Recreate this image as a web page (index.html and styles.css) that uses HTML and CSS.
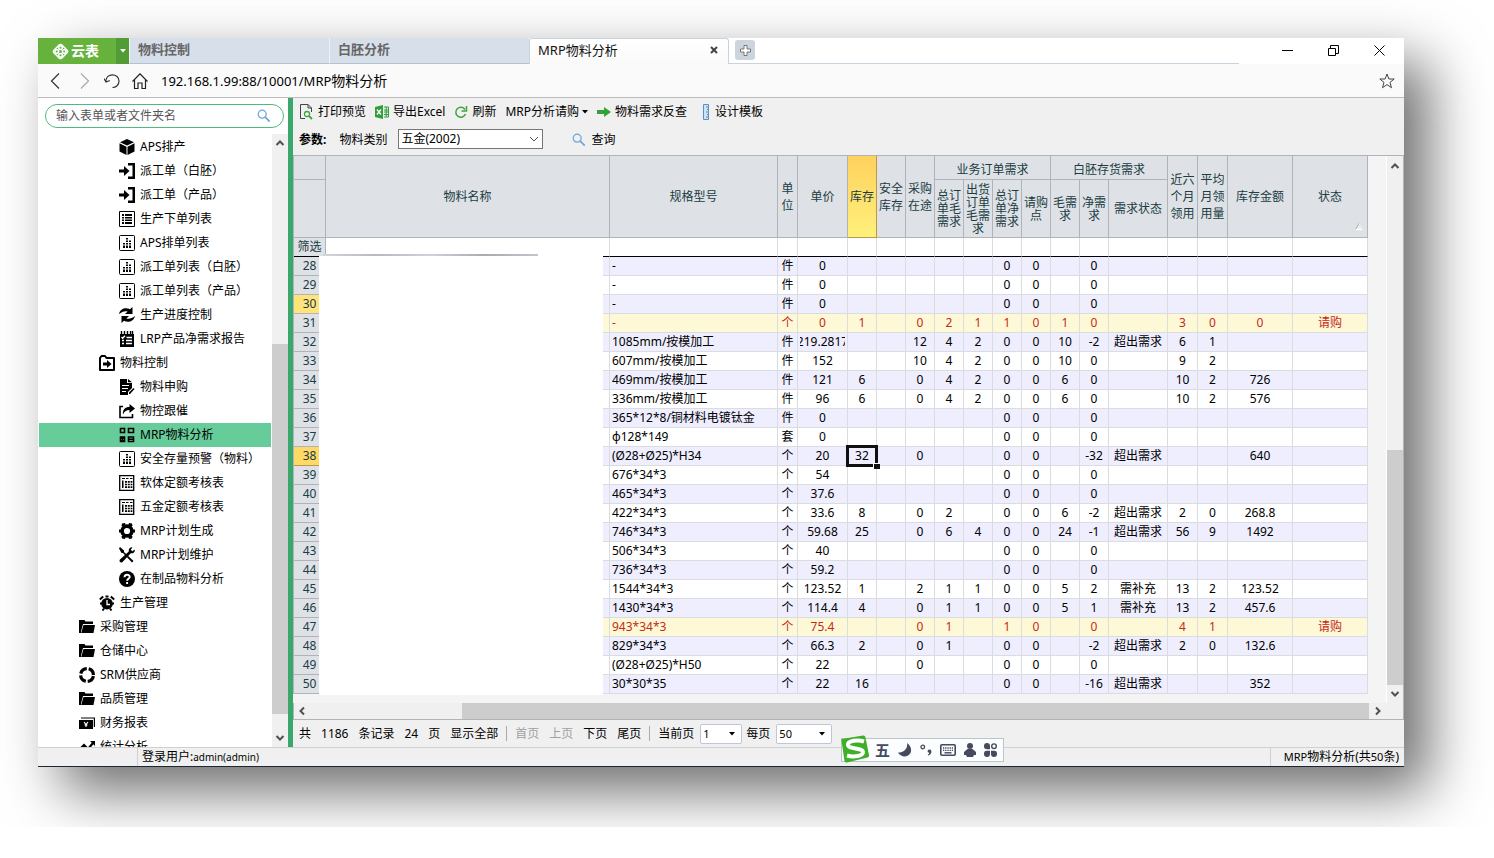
FILE: index.html
```
<!DOCTYPE html>
<html lang="zh-CN">
<head>
<meta charset="utf-8">
<title>MRP物料分析</title>
<link rel="stylesheet" href="styles.css">
</head>
<body>

<svg class="sprite" aria-hidden="true">
  <symbol id="i-box" viewBox="0 0 16 16"><path d="M8 0l7 3.2L8 6.6 1 3.2zM.5 4.3l7 3.4V16l-7-3.6zM15.500 4.300l-7 3.400V16l7-3.600z"/></symbol>
  <symbol id="i-enter" viewBox="0 0 16 16"><path d="M0 6.500h5V3l5.500 5L5 13V9.500H0zM9 0h7v16H9v-2.500h4.500v-11H9z"/></symbol>
  <symbol id="i-list" viewBox="0 0 16 16"><path d="M.5.5h15v15H.5z" fill="none" stroke="#000"/><path d="M3 3h2v2H3zM6 3h7v2H6zM3 6h2v1.500H3zM6 6h7v1.500H6zM3 8.500h2V10H3zM6 8.500h7V10H6zM3 11h2v2H3zM6 11h7v2H6z"/></symbol>
  <symbol id="i-chart" viewBox="0 0 16 16"><rect x=".5" y=".5" width="15" height="15" rx="1" fill="none" stroke="#000"/><path d="M7 3h2v1.500H7zM7 5.500h2V7H7zM7 8h2v1.500H7zM7 10.500h2V13H7zM4 8h2v1.500H4zM4 10.500h2V13H4zM10 5.500h2V7h-2zM10 8h2v1.500h-2zM10 10.500h2V13h-2z"/></symbol>
  <symbol id="i-sync" viewBox="0 0 16 16"><path d="M0 7C1 1.500 7 0 11 2.200L13.500 0v7H6l2.600-2.500C5.500 3.600 3 4.800 0 7zM16 9C15 14.500 9 16 5 13.800L2.500 16V9H10l-2.600 2.500C10.500 12.400 13 11.200 16 9z"/></symbol>
  <symbol id="i-check" viewBox="0 0 16 16"><path d="M1 3h14v13H1z"/><path d="M2.500 0v4M5.500 0v4M8.500 0v4M11.500 0v4M13.500 0v4" stroke="#000" stroke-width="1.400"/><path d="M2.500 6l1.200 1.200L6 4.700M7.500 6.500H13M3 9.500h2M7 9.500h6M3 12.500h2M7 12.500h6" stroke="#fff" fill="none" stroke-width="1.300"/></symbol>
  <symbol id="i-folderin" viewBox="0 0 16 16"><path d="M1 15V3l1.500-2H6l1.500 2H15v12z" fill="none" stroke="#000" stroke-width="2" stroke-linejoin="round"/><path d="M4 7.500h4V5l4.500 4L8 13v-2.500H4z"/></symbol>
  <symbol id="i-doc" viewBox="0 0 16 16"><path d="M1 0h7v4h5v5l-4 4v3H1zM9 0l4 3.200H9zM10 13.500L14.500 9l1 1-4.500 5H10z"/><path d="M3 6.500h7M3 9.500h6M3 12.500h4" stroke="#fff" stroke-width="1.200"/></symbol>
  <symbol id="i-share" viewBox="0 0 16 16"><path d="M4 3.500H1v11h12.500V11" fill="none" stroke="#000" stroke-width="1.600"/><path d="M4 11.500C3.500 6.500 6 4 10.500 4V1L16 5.500 10.500 10V7C7.500 7 5.500 8 4 11.500z"/></symbol>
  <symbol id="i-grid" viewBox="0 0 16 16"><g fill="none" stroke="#000" stroke-width="1.600"><path d="M1.500 1.500h4v4h-4zM9.500 1.500h5v4h-5zM1.500 10h4v4.500h-4zM9.500 10h5v4.500h-5zM2 10l3 4M5 10l-3 4M10 12.200h4"/></g></symbol>
  <symbol id="i-sheet" viewBox="0 0 16 16"><path d="M.7.700h14v14.600H.7z" fill="none" stroke="#000" stroke-width="1.300"/><path d="M3 3h3v1H3zM7 3h2.500v1H7zM11 3h2.500v1H11zM3 5.500h1.500V13H3zM6 6h2v1.700H6zM6 8.700h2v1.600H6zM6 11.300h2V13H6zM8.800 6h2v1.700h-2zM8.800 8.700h2v1.600h-2zM8.800 11.300h2V13h-2zM11.600 6h1.800v1.700h-1.800zM11.600 8.700h1.800v1.600h-1.800zM11.600 11.300h1.800V13h-1.800z"/></symbol>
  <symbol id="i-gear" viewBox="0 0 16 16"><circle cx="8" cy="8" r="4.900" fill="none" stroke="#000" stroke-width="3.600"/><path d="M3 .5L6 0l1 3H2.500zM13 .5L10 0 9 3h4.500zM3 15.500l3 .5 1-3H2.500zM13 15.500l-3 .5-1-3h4.500zM0 6.500h2v3H0zM14 6.500h2v3h-2z"/></symbol>
  <symbol id="i-tools" viewBox="0 0 16 16"><path d="M1 0l4 3.500V5l9.500 9-1.500 1.500L4 6H2.500L0 1.500z"/><path d="M15.800 2.500l-2.500 1.700-1.500-1.500L13.500.3C11 0 9.300 2 9.800 4.500L1 12.500c-1.500 1.800.8 4 2.500 2.500l8.300-8.800c2.500.4 4.400-1.300 4-3.700z"/></symbol>
  <symbol id="i-help" viewBox="0 0 16 16"><circle cx="8" cy="8" r="8"/><path d="M5.500 6.200c0-3.300 5.200-3.200 5.200-.3 0 1.900-2.600 1.900-2.600 3.900M8.100 11v2" fill="none" stroke="#fff" stroke-width="1.900"/></symbol>
  <symbol id="i-clock" viewBox="0 0 16 16"><circle cx="8" cy="8.700" r="5.800"/><path d="M.8 4.500L4.200 1.500M15.200 4.500L11.800 1.500M3.500 15.500l1.500-2M12.500 15.500L11 13.500M1 8.500h2M13 8.500h2M6.500 1.500h3" stroke="#000" stroke-width="2"/><path d="M8 5v4.500h3" stroke="#fff" fill="none" stroke-width="1.300"/></symbol>
  <symbol id="i-folder" viewBox="0 0 16 16"><path d="M0 1h5.500l1 1.500H14V5H4L2 12.500V14H0z"/><path d="M4.500 6H16l-1.500 8H2.200z"/></symbol>
  <symbol id="i-ring" viewBox="0 0 16 16"><circle cx="8" cy="8" r="6.400" fill="none" stroke="#000" stroke-width="3.200" stroke-dasharray="8.050 2" stroke-dashoffset="-1"/></symbol>
  <symbol id="i-money" viewBox="0 0 16 16"><path d="M0 5h14v9H0z"/><path d="M2 3h13.400v9" fill="none" stroke="#000" stroke-width="1.200"/><path d="M5 7l2 2.500L9 7M7 9.500V12M5.500 10h3" fill="none" stroke="#fff" stroke-width="1.200"/></symbol>
  <symbol id="i-trend" viewBox="0 0 16 16"><path d="M0 11l5-5 4 4 5-6M1 15l4-4 4 3 5-5" fill="none" stroke="#000" stroke-width="2.200"/><path d="M11 2h5v5z"/></symbol>
  <symbol id="i-search" viewBox="0 0 14 14"><circle cx="5.200" cy="5.200" r="4" fill="none" stroke="#6fa6d8" stroke-width="1.200"/><path d="M8.200 8.200l4.500 4.500" stroke="#6fa6d8" stroke-width="1.700"/></symbol>
  <symbol id="i-up" viewBox="0 0 10 10"><path d="M1.500 7L5 3.500 8.500 7" fill="none" stroke="#505050" stroke-width="2"/></symbol>
  <symbol id="i-down" viewBox="0 0 10 10"><path d="M1.500 3L5 6.500 8.500 3" fill="none" stroke="#505050" stroke-width="2"/></symbol>
  <symbol id="i-left" viewBox="0 0 10 10"><path d="M7 1.500L3.500 5 7 8.500" fill="none" stroke="#505050" stroke-width="2"/></symbol>
  <symbol id="i-right" viewBox="0 0 10 10"><path d="M3 1.500L6.500 5 3 8.500" fill="none" stroke="#505050" stroke-width="2"/></symbol>
  <symbol id="i-caret" viewBox="0 0 6 4"><path d="M0 0h6L3 3.500z"/></symbol>
</svg>

<div class="window">

  <header class="tabs">
    <button class="brand" type="button">
      <svg width="17" height="17" viewBox="0 0 17 17" fill="none" stroke="#fff" stroke-width="1.500"><rect x="3" y="3" width="11" height="11" rx="2" transform="rotate(45 8.500 8.500)"/><circle cx="8.500" cy="4.800" r="1.800"/><circle cx="8.500" cy="12.200" r="1.800"/><circle cx="4.800" cy="8.500" r="1.800"/><circle cx="12.200" cy="8.500" r="1.800"/></svg>
      云表
    </button>
    <button class="brand-more" type="button" aria-label="菜单"><svg width="6" height="4" fill="#fff"><use href="#i-caret"/></svg></button>
    <a class="tab" href="#">物料控制</a>
    <a class="tab" href="#">白胚分析</a>
    <a class="tab active" href="#">MRP物料分析
      <svg width="8" height="8" viewBox="0 0 8 8"><path d="M1 1l6 6M7 1L1 7" stroke="#444" stroke-width="2"/></svg>
    </a>
    <div class="tab-rest">
      <button class="new-tab" type="button" aria-label="新标签"><svg width="11" height="11" viewBox="0 0 11 11"><path d="M4 .5h3V4h3.500v3H7v3.500H4V7H.5V4H4z" fill="#fff" stroke="#777"/></svg></button>
    </div>
    <div class="win-buttons">
      <button type="button" aria-label="最小化"><svg width="11" height="11" viewBox="0 0 11 11"><path d="M0 5.500h11" stroke="#000"/></svg></button>
      <button type="button" aria-label="还原"><svg width="11" height="11" viewBox="0 0 11 11" fill="none" stroke="#000"><path d="M.5 3.500h7v7h-7zM2.500 3.500v-3h8v8h-3"/></svg></button>
      <button type="button" aria-label="关闭"><svg width="11" height="11" viewBox="0 0 11 11"><path d="M.5.5l10 10M10.500.5l-10 10" stroke="#000"/></svg></button>
    </div>
  </header>

  <nav class="address">
    <button type="button" aria-label="后退"><svg width="16" height="16" viewBox="0 0 16 16"><path d="M11 .5L3.500 8l7.500 7.500" fill="none" stroke="#333" stroke-width="1.200"/></svg></button>
    <button type="button" aria-label="前进"><svg width="16" height="16" viewBox="0 0 16 16"><path d="M5 .5L12.500 8 5 15.500" fill="none" stroke="#aaa" stroke-width="1.200"/></svg></button>
    <button type="button" aria-label="刷新"><svg width="16" height="16" viewBox="0 0 16 16"><path d="M1.800 8.500C2 -0.500 15 0 15 8c0 4-3 6.500-6.500 6.500M0 5.500l2 3.500 3.800-1.500" fill="none" stroke="#333" stroke-width="1.200"/></svg></button>
    <button type="button" aria-label="主页"><svg width="16" height="16" viewBox="0 0 16 16"><path d="M.5 8.500L8 .8l7.500 7.700M2.500 7v8.500H6V10h4v5.500h3.500V7" fill="none" stroke="#222" stroke-width="1.200"/></svg></button>
    <span class="url">192.168.1.99:88/10001/MRP<b>物料分析</b></span>
    <button class="star" type="button" aria-label="收藏"><svg width="16" height="16" viewBox="0 0 16 16"><path d="M8 1l1.900 5h5.300l-4.200 3.400 1.500 5.300L8 11.600l-4.500 3.100L5 9.400.8 6h5.300z" fill="none" stroke="#444"/></svg></button>
  </nav>

  <div class="main">
    <aside class="side">
      <label class="search">
        <input type="text" placeholder="输入表单或者文件夹名" aria-label="搜索">
        <svg width="14" height="14"><use href="#i-search"/></svg>
      </label>
      <div class="tree-wrap">
        <ul class="tree">
          <li class="l3"><svg><use href="#i-box"/></svg>APS排产</li>
          <li class="l3"><svg><use href="#i-enter"/></svg>派工单（白胚）</li>
          <li class="l3"><svg><use href="#i-enter"/></svg>派工单（产品）</li>
          <li class="l3"><svg><use href="#i-list"/></svg>生产下单列表</li>
          <li class="l3"><svg><use href="#i-chart"/></svg>APS排单列表</li>
          <li class="l3"><svg><use href="#i-chart"/></svg>派工单列表（白胚）</li>
          <li class="l3"><svg><use href="#i-chart"/></svg>派工单列表（产品）</li>
          <li class="l3"><svg><use href="#i-sync"/></svg>生产进度控制</li>
          <li class="l3"><svg><use href="#i-check"/></svg>LRP产品净需求报告</li>
          <li class="l2"><svg><use href="#i-folderin"/></svg>物料控制</li>
          <li class="l3"><svg><use href="#i-doc"/></svg>物料申购</li>
          <li class="l3"><svg><use href="#i-share"/></svg>物控跟催</li>
          <li class="l3 on"><svg><use href="#i-grid"/></svg>MRP物料分析</li>
          <li class="l3"><svg><use href="#i-chart"/></svg>安全存量预警（物料）</li>
          <li class="l3"><svg><use href="#i-sheet"/></svg>软体定额考核表</li>
          <li class="l3"><svg><use href="#i-sheet"/></svg>五金定额考核表</li>
          <li class="l3"><svg><use href="#i-gear"/></svg>MRP计划生成</li>
          <li class="l3"><svg><use href="#i-tools"/></svg>MRP计划维护</li>
          <li class="l3"><svg><use href="#i-help"/></svg>在制品物料分析</li>
          <li class="l2"><svg><use href="#i-clock"/></svg>生产管理</li>
          <li class="l1"><svg><use href="#i-folder"/></svg>采购管理</li>
          <li class="l1"><svg><use href="#i-folder"/></svg>仓储中心</li>
          <li class="l1"><svg><use href="#i-ring"/></svg>SRM供应商</li>
          <li class="l1"><svg><use href="#i-folder"/></svg>品质管理</li>
          <li class="l1"><svg><use href="#i-money"/></svg>财务报表</li>
          <li class="l1"><svg><use href="#i-trend"/></svg>统计分析</li>
        </ul>
        <div class="vbar side-bar">
          <svg width="10" height="10"><use href="#i-up"/></svg>
          <div class="rail"><div class="thumb"></div></div>
          <svg width="10" height="10"><use href="#i-down"/></svg>
        </div>
      </div>
    </aside>

    <section class="content">
      <div class="toolbar">
        <button type="button"><svg width="14" height="16" viewBox="0 0 14 16"><path d="M11.500 8V4L8 .5H.5v14H5M8 .5V4h3.500" fill="none" stroke="#444"/><circle cx="7" cy="10" r="2.500" fill="#fff" stroke="#3fa33f" stroke-width="1.300"/><path d="M9 12l3 3" stroke="#3fa33f" stroke-width="1.800"/></svg>打印预览</button>
        <button type="button"><svg width="14" height="14" viewBox="0 0 14 14"><path d="M0 2l8-2v14l-8-2z" fill="#2f9e3c"/><path d="M2 4.500l4 5M6 4.500l-4 5" stroke="#fff" stroke-width="1.400"/><path d="M9 2h4.500v10H9M9 5h4M9 7h4M9 9.500h4M11.200 2v10" fill="none" stroke="#2f9e3c"/></svg>导出Excel</button>
        <button type="button"><svg width="14" height="14" viewBox="0 0 14 14"><path d="M11 4.500A5 5 0 1 0 11.500 9" fill="none" stroke="#3fa33f" stroke-width="1.500"/><path d="M12.500 1v5H7.500" fill="none" stroke="#3fa33f" stroke-width="1.500"/></svg>刷新</button>
        <button type="button">MRP分析请购<svg class="caret" width="6" height="4"><use href="#i-caret"/></svg></button>
        <button type="button"><svg width="14" height="12" viewBox="0 0 14 12"><path d="M0 4h7V1l7 5-7 5V8H0z" fill="#2fa336"/></svg>物料需求反查</button>
        <button class="design" type="button"><svg width="8" height="16" viewBox="0 0 8 16"><path d="M1.500.5h5v15h-5z" fill="#cfe3f6" stroke="#5b8fc4"/><path d="M4 3h3M5 5.500h2M4 8h3M5 10.500h2M4 13h3" stroke="#5b8fc4"/></svg>设计模板</button>
      </div>
      <div class="params">
        <strong>参数:</strong>
        <label for="kind">物料类别</label>
        <span class="pick kind"><select id="kind"><option>五金(2002)</option></select><svg width="10" height="10" viewBox="0 0 10 10"><path d="M1 3l4 4 4-4" fill="none" stroke="#555"/></svg></span>
        <button type="button"><svg width="14" height="14"><use href="#i-search"/></svg>查询</button>
      </div>

      <div class="sheet">
        <div class="table-box">
          <table class="grid">
            <colgroup>
              <col class="w32"><col><col class="w168"><col class="w20"><col class="w50"><col class="w29"><col class="w29"><col class="w29">
              <col class="w29"><col class="w29"><col class="w29"><col class="w29"><col class="w29"><col class="w29"><col class="w59">
              <col class="w30"><col class="w30"><col class="w65"><col class="w75">
            </colgroup>
            <thead>
              <tr class="h1">
                <th></th>
                <th rowspan="2">物料名称</th>
                <th rowspan="2">规格型号</th>
                <th rowspan="2">单位</th>
                <th rowspan="2">单价</th>
                <th rowspan="2" class="hot">库存</th>
                <th rowspan="2">安全库存</th>
                <th rowspan="2">采购在途</th>
                <th colspan="4" class="group">业务订单需求</th>
                <th colspan="3" class="group">白胚存货需求</th>
                <th rowspan="2">近六个月领用</th>
                <th rowspan="2">平均月领用量</th>
                <th rowspan="2">库存金额</th>
                <th rowspan="2" class="sorted">状态<svg width="8" height="7" viewBox="0 0 8 7"><path d="M.5 6.500L4 .5l3.500 6z" fill="#eee" stroke="#aaa"/><path d="M.5 6.500h7L4 .5" fill="none" stroke="#fff"/></svg></th>
              </tr>
              <tr class="h2">
                <th></th>
                <th>总订单毛需求</th><th>出货订单毛需求</th><th>总订单净需求</th><th>请购点</th><th>毛需求</th><th>净需求</th><th>需求状态</th>
              </tr>
            </thead>
            <tbody>
              <tr class="filter"><th>筛选</th><td></td><td></td><td></td><td></td><td></td><td></td><td></td><td></td><td></td><td></td><td></td><td></td><td></td><td></td><td></td><td></td><td></td><td></td></tr>
              <tr><th>28</th><td></td><td>-</td><td>件</td><td>0</td><td></td><td></td><td></td><td></td><td></td><td>0</td><td>0</td><td></td><td>0</td><td></td><td></td><td></td><td></td><td></td></tr>
              <tr><th>29</th><td></td><td>-</td><td>件</td><td>0</td><td></td><td></td><td></td><td></td><td></td><td>0</td><td>0</td><td></td><td>0</td><td></td><td></td><td></td><td></td><td></td></tr>
              <tr><th class="mark">30</th><td></td><td>-</td><td>件</td><td>0</td><td></td><td></td><td></td><td></td><td></td><td>0</td><td>0</td><td></td><td>0</td><td></td><td></td><td></td><td></td><td></td></tr>
              <tr class="warn"><th>31</th><td></td><td>-</td><td>个</td><td>0</td><td>1</td><td></td><td>0</td><td>2</td><td>1</td><td>1</td><td>0</td><td>1</td><td>0</td><td></td><td>3</td><td>0</td><td>0</td><td>请购</td></tr>
              <tr><th>32</th><td></td><td>1085mm/按模加工</td><td>件</td><td><span class="clip">219.2817</span></td><td></td><td></td><td>12</td><td>4</td><td>2</td><td>0</td><td>0</td><td>10</td><td>-2</td><td>超出需求</td><td>6</td><td>1</td><td></td><td></td></tr>
              <tr><th>33</th><td></td><td>607mm/按模加工</td><td>件</td><td>152</td><td></td><td></td><td>10</td><td>4</td><td>2</td><td>0</td><td>0</td><td>10</td><td>0</td><td></td><td>9</td><td>2</td><td></td><td></td></tr>
              <tr><th>34</th><td></td><td>469mm/按模加工</td><td>件</td><td>121</td><td>6</td><td></td><td>0</td><td>4</td><td>2</td><td>0</td><td>0</td><td>6</td><td>0</td><td></td><td>10</td><td>2</td><td>726</td><td></td></tr>
              <tr><th>35</th><td></td><td>336mm/按模加工</td><td>件</td><td>96</td><td>6</td><td></td><td>0</td><td>4</td><td>2</td><td>0</td><td>0</td><td>6</td><td>0</td><td></td><td>10</td><td>2</td><td>576</td><td></td></tr>
              <tr><th>36</th><td></td><td>365*12*8/铜材料电镀钛金</td><td>件</td><td>0</td><td></td><td></td><td></td><td></td><td></td><td>0</td><td>0</td><td></td><td>0</td><td></td><td></td><td></td><td></td><td></td></tr>
              <tr><th>37</th><td></td><td>φ128*149</td><td>套</td><td>0</td><td></td><td></td><td></td><td></td><td></td><td>0</td><td>0</td><td></td><td>0</td><td></td><td></td><td></td><td></td><td></td></tr>
              <tr><th class="mark now">38</th><td></td><td>(Ø28+Ø25)*H34</td><td>个</td><td>20</td><td class="cursor">32</td><td></td><td>0</td><td></td><td></td><td>0</td><td>0</td><td></td><td>-32</td><td>超出需求</td><td></td><td></td><td>640</td><td></td></tr>
              <tr><th>39</th><td></td><td>676*34*3</td><td>个</td><td>54</td><td></td><td></td><td></td><td></td><td></td><td>0</td><td>0</td><td></td><td>0</td><td></td><td></td><td></td><td></td><td></td></tr>
              <tr><th>40</th><td></td><td>465*34*3</td><td>个</td><td>37.6</td><td></td><td></td><td></td><td></td><td></td><td>0</td><td>0</td><td></td><td>0</td><td></td><td></td><td></td><td></td><td></td></tr>
              <tr><th>41</th><td></td><td>422*34*3</td><td>个</td><td>33.6</td><td>8</td><td></td><td>0</td><td>2</td><td></td><td>0</td><td>0</td><td>6</td><td>-2</td><td>超出需求</td><td>2</td><td>0</td><td>268.8</td><td></td></tr>
              <tr><th>42</th><td></td><td>746*34*3</td><td>个</td><td>59.68</td><td>25</td><td></td><td>0</td><td>6</td><td>4</td><td>0</td><td>0</td><td>24</td><td>-1</td><td>超出需求</td><td>56</td><td>9</td><td>1492</td><td></td></tr>
              <tr><th>43</th><td></td><td>506*34*3</td><td>个</td><td>40</td><td></td><td></td><td></td><td></td><td></td><td>0</td><td>0</td><td></td><td>0</td><td></td><td></td><td></td><td></td><td></td></tr>
              <tr><th>44</th><td></td><td>736*34*3</td><td>个</td><td>59.2</td><td></td><td></td><td></td><td></td><td></td><td>0</td><td>0</td><td></td><td>0</td><td></td><td></td><td></td><td></td><td></td></tr>
              <tr><th>45</th><td></td><td>1544*34*3</td><td>个</td><td>123.52</td><td>1</td><td></td><td>2</td><td>1</td><td>1</td><td>0</td><td>0</td><td>5</td><td>2</td><td>需补充</td><td>13</td><td>2</td><td>123.52</td><td></td></tr>
              <tr><th>46</th><td></td><td>1430*34*3</td><td>个</td><td>114.4</td><td>4</td><td></td><td>0</td><td>1</td><td>1</td><td>0</td><td>0</td><td>5</td><td>1</td><td>需补充</td><td>13</td><td>2</td><td>457.6</td><td></td></tr>
              <tr class="warn"><th>47</th><td></td><td>943*34*3</td><td>个</td><td>75.4</td><td></td><td></td><td>0</td><td>1</td><td></td><td>1</td><td>0</td><td></td><td>0</td><td></td><td>4</td><td>1</td><td></td><td>请购</td></tr>
              <tr><th>48</th><td></td><td>829*34*3</td><td>个</td><td>66.3</td><td>2</td><td></td><td>0</td><td>1</td><td></td><td>0</td><td>0</td><td></td><td>-2</td><td>超出需求</td><td>2</td><td>0</td><td>132.6</td><td></td></tr>
              <tr><th>49</th><td></td><td>(Ø28+Ø25)*H50</td><td>个</td><td>22</td><td></td><td></td><td>0</td><td></td><td></td><td>0</td><td>0</td><td></td><td>0</td><td></td><td></td><td></td><td></td><td></td></tr>
              <tr><th>50</th><td></td><td>30*30*35</td><td>个</td><td>22</td><td>16</td><td></td><td></td><td></td><td></td><td>0</td><td>0</td><td></td><td>-16</td><td>超出需求</td><td></td><td></td><td>352</td><td></td></tr>
            </tbody>
          </table>
          <div class="mask"></div>
        </div>
        <div class="vbar sheet-bar">
          <svg width="10" height="10"><use href="#i-up"/></svg>
          <div class="rail"><div class="thumb"></div></div>
          <svg width="10" height="10"><use href="#i-down"/></svg>
        </div>
      </div>
      <div class="hbar">
        <svg width="10" height="10"><use href="#i-left"/></svg>
        <div class="rail"><div class="thumb"></div></div>
        <svg width="10" height="10"><use href="#i-right"/></svg>
      </div>

      <div class="pager">
        <span>共</span><span>1186</span><span>条记录</span><span>24</span><span>页</span>
        <a href="#">显示全部</a>
        <i></i>
        <a class="off" href="#">首页</a><a class="off" href="#">上页</a><a href="#">下页</a><a href="#">尾页</a>
        <i></i>
        <label for="page">当前页</label>
        <span class="pick page"><select id="page"><option>1</option></select><svg width="6" height="4"><use href="#i-caret"/></svg></span>
        <label for="size">每页</label>
        <span class="pick size"><select id="size"><option>50</option></select><svg width="6" height="4"><use href="#i-caret"/></svg></span>
      </div>
    </section>
  </div>

  <footer class="status">
    <span class="user">登录用户:<small>admin(admin)</small></span>
    <span class="total"><small>MRP</small>物料分析(共<small>50</small>条)</span>
  </footer>

  <div class="ime">
    <svg class="sogou" width="28" height="28" viewBox="0 0 28 28"><path d="M1 4L22 .5q2-.3 2.400 1.500L28 20q.3 2-1.500 2.500L6 27.500q-2 .3-2.500-1.500L.5 6q-.2-1.500.5-2z" fill="#3db028"/><path d="M23 6.500C17 4.500 6.500 5.500 7 10c.5 4.500 14.500 2.500 15 7 .3 4-9 5.500-16 3.500" fill="none" stroke="#fff" stroke-width="4"/></svg>
    <b>五</b>
    <svg width="14" height="14" viewBox="0 0 14 14"><path d="M9 0c1 5-2.500 9.500-9 9.500C2 13 6.500 14.500 10 12.500 14.500 10 14 3 9 0z"/></svg>
    <svg width="12" height="12" viewBox="0 0 12 12"><circle cx="2.800" cy="3" r="1.800" fill="none" stroke="#454b5e" stroke-width="1.300"/><path d="M10 5.500c2.500 1 1.500 5-1.800 6l-.5-.7c1.300-.6 1.600-1.300 1.500-2C6.500 8.700 7.500 5 10 5.500z"/></svg>
    <svg width="16" height="12" viewBox="0 0 16 12"><rect x=".8" y=".8" width="14.400" height="10.400" rx="1" fill="none" stroke="#454b5e" stroke-width="1.600"/><path d="M3 4h10M3 6.300h10" stroke="#454b5e" stroke-width="1.300" stroke-dasharray="1.300 .9"/><path d="M4.500 8.800h7" stroke="#454b5e" stroke-width="1.400"/></svg>
    <svg width="12" height="14" viewBox="0 0 12 14"><circle cx="6" cy="3" r="3"/><path d="M3.500 6h5L12 9v3h-2l-1 2H3l-1-2H0V9z"/></svg>
    <svg width="13" height="14" viewBox="0 0 13 14"><path d="M0 3a3 3 0 0 1 6 0v3.200H3A3 3 0 0 1 0 3zM0 11a3 3 0 0 1 3-3.200h3V11a3 3 0 0 1-6 0zM13 11a3 3 0 0 0-3-3.200H7V11a3 3 0 0 0 6 0z"/><circle cx="10" cy="3.200" r="2.300" fill="none" stroke="#454b5e" stroke-width="1.400"/></svg>
  </div>
</div>

</body>
</html>
```
FILE: styles.css
```
* { box-sizing: border-box; }

body {
  margin: 0;
  padding: 38px 90px 60px 38px;
  background: #fff;
  color: #000;
  font: 12px/18px "Noto Sans", "Noto Sans CJK SC", sans-serif;
}

a { color: inherit; text-decoration: none; }

button {
  display: inline-flex;
  align-items: center;
  margin: 0;
  padding: 0;
  border: 0;
  background: none;
  color: inherit;
  font: inherit;
}

svg { flex: none; }

.sprite { position: absolute; width: 0; height: 0; }

.window {
  position: relative;
  border-bottom: 1px solid #1c2733;
  background: #f0f0f0;
  box-shadow: 24px 24px 54px rgba(0, 0, 0, .58);
}

/* tabs */
.tabs { display: flex; height: 26px; background: #fff; }

.brand {
  gap: 2px;
  width: 78px;
  padding-left: 14px;
  background: #66b23d;
  color: #fff;
  font-size: 14px;
  font-weight: bold;
}

.brand-more { justify-content: center; width: 13px; background: #529b35; }

.tab {
  display: flex;
  align-items: center;
  justify-content: space-between;
  width: 200px;
  padding: 0 10px 3px 8px;
  border-left: 1px solid #eef2f7;
  border-bottom: 1px solid #b4c3d4;
  background: #d6dfea;
  color: #666;
  font-size: 13px;
  font-weight: bold;
}

.tab.active {
  border: 1px solid #c8d3dc;
  border-bottom: 0;
  border-radius: 3px 3px 0 0;
  background: linear-gradient(#fff, #fafafa);
  color: #111;
  font-weight: normal;
}

.tab-rest {
  flex: 1;
  max-width: 510px;
  padding: 2px 6px;
  border-bottom: 1px solid #c8d3dc;
}

.new-tab { justify-content: center; width: 20px; height: 20px; border-radius: 3px; background: #ccd5de; }

.win-buttons { display: flex; gap: 35px; margin-left: auto; padding: 0 19px 2px 0; }

/* address */
.address {
  display: flex;
  align-items: center;
  gap: 12px;
  height: 34px;
  padding: 0 9px 0 10px;
  border-bottom: 1px solid #bcbcbc;
  background: #fafafa;
}

.url { padding-left: 1px; font-size: 13px; }
.url b { font-weight: normal; font-size: 14px; }
.star { margin-left: auto; }

/* main */
.main { display: flex; }

.side {
  display: flex;
  flex-direction: column;
  width: 255px;
  border-right: 5px solid #3aa76d;
  background: #fff;
}

.search {
  display: flex;
  align-items: center;
  height: 24px;
  margin: 6px 4px 6px 7px;
  padding: 0 12px 0 10px;
  border: 1px solid #4fba7e;
  border-radius: 12px;
}

.search input {
  flex: 1;
  min-width: 0;
  padding: 0;
  border: 0;
  outline: 0;
  background: none;
  font: inherit;
}

.search input::placeholder { color: #555; opacity: 1; }

.tree-wrap { display: flex; flex: 1 1 0; min-height: 0; height: 0; overflow: hidden; }

.tree { flex: 1; margin: 0; padding: 1px 1px 0; list-style: none; }

.tree li { display: flex; align-items: center; gap: 5px; height: 24px; }
.tree svg { width: 16px; height: 16px; }
.tree .l1 { padding-left: 40px; }
.tree .l2 { padding-left: 60px; }
.tree .l3 { padding-left: 80px; }
.tree .on { background: #66cd9a; }

.vbar { display: flex; flex-direction: column; align-items: center; width: 16px; background: #f0f0f0; }
.vbar .rail { display: flex; flex: 1; align-self: stretch; }
.vbar .thumb { width: 100%; background: #cdcdcd; }
.side-bar { padding: 4px 0; }
.side-bar .thumb { margin: 196px 0 19px; }

.content { flex: 1; min-width: 0; }

/* toolbar */
.toolbar { display: flex; height: 28px; padding-left: 7px; gap: 9px; }
.toolbar button { gap: 4px; }
.toolbar .caret { margin-left: -1px; }
.toolbar .design { margin-left: 6px; gap: 5px; }

.params { display: flex; align-items: center; height: 29px; padding: 0 6px 2px; }
.params label { margin: 0 11px 0 13px; }
.params button { gap: 5px; margin-left: 29px; }

.pick { position: relative; display: inline-flex; align-items: center; }
.pick select {
  width: 100%;
  height: 20px;
  padding: 0 2px;
  border: 1px solid #767676;
  border-radius: 0;
  background: #fff;
  color: #000;
  font: inherit;
  appearance: none;
}
.pick svg { position: absolute; right: 4px; pointer-events: none; }
.kind { width: 145px; }
.params .kind { margin-bottom: 2px; }

/* sheet */
.sheet { display: flex; border-top: 1px solid #b0b4b8; border-right: 1px solid #b0b4b8; }

.table-box { position: relative; flex: 1; min-width: 0; padding: 0 18px 9px 0; background: #f4f4f4; }

.grid { width: 100%; table-layout: fixed; border-spacing: 0; border-left: 1px solid #b0b4b8; }

.grid th,
.grid td {
  height: 19px;
  padding: 0;
  border: solid #dadce0;
  border-width: 0 1px 1px 0;
  background: #fff;
  font-weight: normal;
  text-align: center;
  white-space: nowrap;
}

.grid td:nth-child(3) { padding-left: 2px; text-align: left; }

.grid th { border-color: #b0b4b8; background: #dee2e7; color: #203c42; }
.grid thead th { padding: 0 2px; line-height: 17px; white-space: normal; }
.grid .h1 th { height: 24px; }
.grid .h1 .group { padding-top: 3px; }
.grid .h2 th { height: 58px; line-height: 13px; }

.grid .h1 .hot { border-color: #c09845; background: linear-gradient(#ffd15e, #fff07c); }

.sorted { position: relative; }
.sorted svg { position: absolute; right: 4px; bottom: 7px; }

.grid .filter td, .grid .filter th { border-bottom-color: #000; }
.grid tbody tr:nth-child(even) td { background: #eeeeff; }
.grid tbody .warn td { background: #fdf9d6; color: #c8281c; }
.grid tbody .mark { background: #ffe47c; }
.grid tbody .now { border-color: #c09845; background: #ffd966; }

.clip { display: flex; justify-content: center; margin: 0 2px; overflow: hidden; }

.w20 { width: 20px; }
.w29 { width: 29px; }
.w30 { width: 30px; }
.w32 { width: 32px; }
.w50 { width: 50px; }
.w59 { width: 59px; }
.w65 { width: 65px; }
.w75 { width: 75px; }
.w168 { width: 168px; }

.grid .cursor { position: relative; }
.cursor::before {
  content: "";
  position: absolute;
  inset: -2px;
  border: 3px solid #111;
}
.cursor::after {
  content: "";
  position: absolute;
  right: -4px;
  bottom: -4px;
  width: 6px;
  height: 5px;
  border: solid #fff;
  border-width: 1px 0 0 1px;
  background: #111;
}

/* blank area over the name column */
.mask {
  position: absolute;
  top: 100px;
  right: 783px;
  bottom: 8px;
  left: 26px;
  background: #fff;
}
.mask::before {
  content: "";
  position: absolute;
  top: -2px;
  left: 4px;
  width: 215px;
  height: 2px;
  background: linear-gradient(90deg, #d4d4dc, #b8b8c0, #d0d0e0, #aaaab0, #c4c4d0);
}

.sheet-bar { width: 17px; padding: 5px 0 4px; border-left: 1px solid #fff; }
.sheet-bar .thumb { margin: 279px 0 4px; }

.hbar {
  display: flex;
  align-items: center;
  height: 17px;
  padding: 0 20px 0 3px;
  border: solid #b0b4b8;
  border-width: 0 1px 1px;
  background: #f0f0f0;
}
.hbar .rail { display: flex; flex: 1; align-self: stretch; margin: 0 4px 0 7px; }
.hbar .thumb { flex: 1; margin-left: 148px; background: #cdcdcd; }

/* pager */
.pager { display: flex; align-items: center; gap: 10px; height: 27px; padding-left: 6px; }
.pager i { width: 1px; height: 15px; margin: 0 -2px; background: #aaa; }
.pager .off { color: #a0a0a0; }
.pager .pick { margin-left: -4px; }
.pager .pick + label { margin-left: -6px; }
.pager select { border-color: #bcc6dc; border-radius: 2px; font-size: 11px; }
.pager .pick svg { right: 7px; }
.page { width: 42px; }
.size { width: 56px; }

/* status */
.status {
  display: flex;
  justify-content: space-between;
  height: 19px;
  border-top: 1px solid #d0d0d0;
}
.status span { padding: 0 5px 0 4px; border-left: 1px solid #d0d0d0; }
.status small { font-size: 11px; }
.status .user small { font-size: 10px; }
.user { margin-left: 99px; }
.status .total { padding-left: 13px; }

/* input method bar */
.ime {
  position: absolute;
  right: 400px;
  bottom: 4px;
  display: flex;
  align-items: center;
  gap: 8px;
  height: 24px;
  padding: 0 6px 0 33px;
  border: 1px solid #b8c4ce;
  background: #fcfdff;
  color: #454b5e;
  fill: #454b5e;
}
.ime b { font-size: 15px; }
.sogou { position: absolute; left: -1px; top: -4px; }
```
